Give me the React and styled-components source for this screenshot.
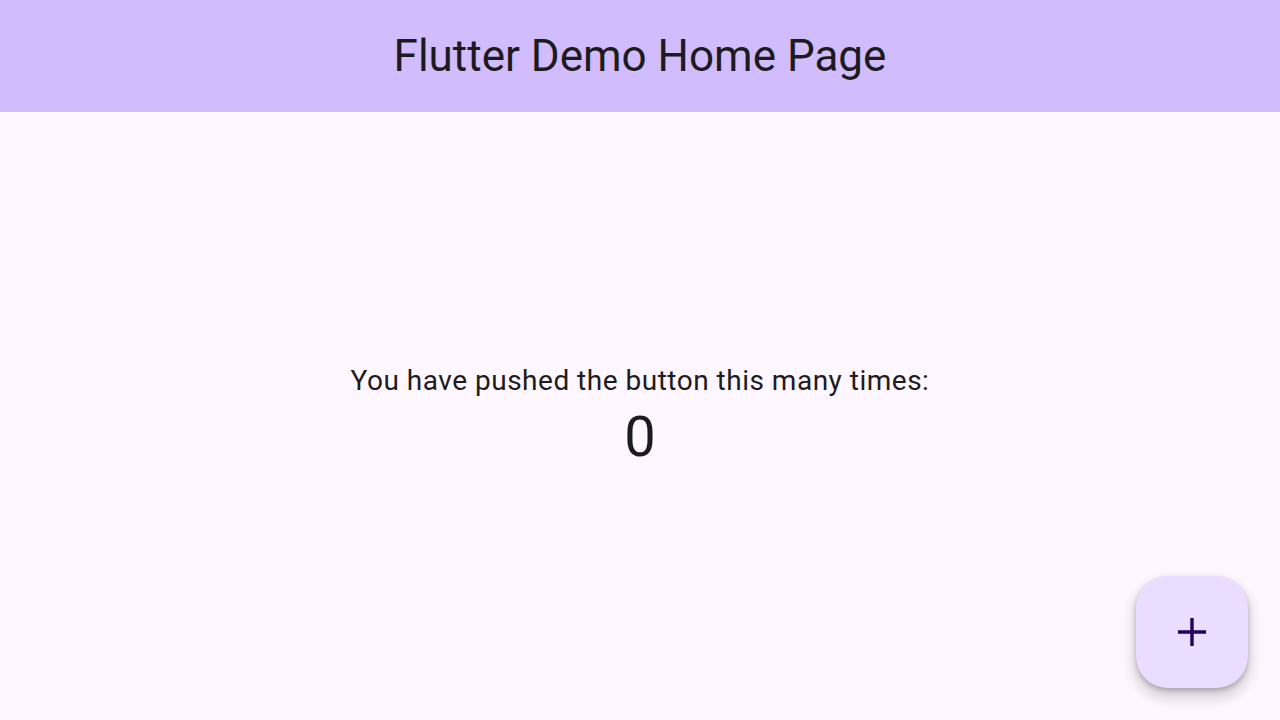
import React, { useState } from 'react';
import styled, { createGlobalStyle } from 'styled-components';

const GlobalStyle = createGlobalStyle`
  html, body, #root {
    margin: 0;
    padding: 0;
    height: 100%;
  }
  body {
    font-family: Roboto, "Liberation Sans", sans-serif;
    background-color: #fef7ff;
    color: #1d1b20;
  }
`;

const Page = styled.div`
  position: relative;
  display: flex;
  flex-direction: column;
  height: 100vh;
  overflow: hidden;
`;

const AppBar = styled.header`
  display: flex;
  align-items: center;
  justify-content: center;
  height: 112px;
  flex-shrink: 0;
  background-color: #d1bcfd;
`;

const Title = styled.h1`
  margin: 0;
  font-size: 44px;
  font-weight: 400;
  line-height: 56px;
  color: #1d1b20;
`;

const Body = styled.main`
  flex: 1;
  display: flex;
  flex-direction: column;
  align-items: center;
  justify-content: center;
  padding-top: 2px;
`;

const Message = styled.p`
  margin: 0;
  font-size: 28px;
  line-height: 40px;
  letter-spacing: 0.5px;
  color: #1d1b20;
`;

const Counter = styled.div`
  font-size: 56px;
  line-height: 72px;
  color: #1d1b20;
`;

const Fab = styled.button`
  position: absolute;
  right: 32px;
  bottom: 32px;
  width: 112px;
  height: 112px;
  display: flex;
  align-items: center;
  justify-content: center;
  border: none;
  border-radius: 32px;
  background-color: #eaddff;
  color: #21005d;
  cursor: pointer;
  box-shadow: 0 8px 12px 4px rgba(0, 0, 0, 0.13), 0 3px 5px rgba(0, 0, 0, 0.22);
`;

const AddIcon = () => (
  <svg width="48" height="48" viewBox="0 0 24 24" fill="currentColor">
    <path d="M19 12.85h-6.15V19h-1.7v-6.15H5v-1.7h6.15V5h1.7v6.15H19z" />
  </svg>
);

const App = () => {
  const [count, setCount] = useState(0);

  return (
    <Page>
      <GlobalStyle />
      <AppBar>
        <Title>Flutter Demo Home Page</Title>
      </AppBar>
      <Body>
        <Message>You have pushed the button this many times:</Message>
        <Counter>{count}</Counter>
      </Body>
      <Fab aria-label="Increment" onClick={() => setCount((c) => c + 1)}>
        <AddIcon />
      </Fab>
    </Page>
  );
};

export default App;
